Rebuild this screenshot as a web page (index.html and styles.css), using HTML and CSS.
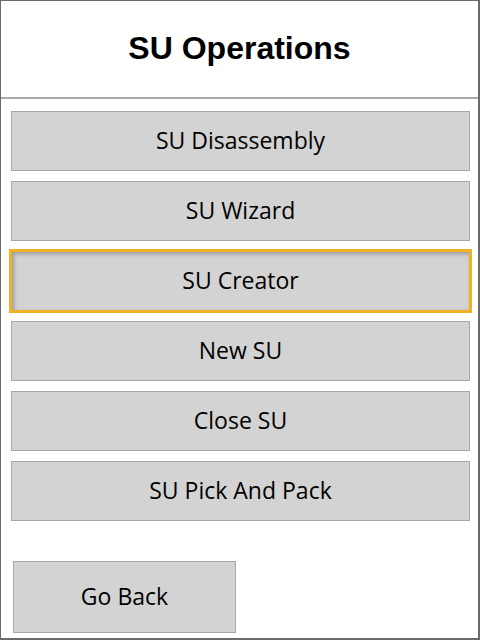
FILE: index.html
```html
<!DOCTYPE html>
<html lang="en">
<head>
<meta charset="utf-8">
<title>SU Operations</title>
<link rel="stylesheet" href="styles.css">
</head>
<body>
<div class="frame">
  <header class="header">
    <h1 class="title">SU Operations</h1>
  </header>
  <main class="menu">
    <button class="btn">SU Disassembly</button>
    <button class="btn">SU Wizard</button>
    <button class="btn btn-focus">SU Creator</button>
    <button class="btn">New SU</button>
    <button class="btn">Close SU</button>
    <button class="btn">SU Pick And Pack</button>
  </main>
  <footer class="footer">
    <button class="btn btn-back">Go Back</button>
  </footer>
</div>
</body>
</html>
```

FILE: styles.css
```css
html, body {
  margin: 0;
  padding: 0;
  background: #ffffff;
}

.frame {
  width: 480px;
  height: 640px;
  box-sizing: border-box;
  border: 1px solid #6b6b6b;
  border-right-width: 2px;
  border-bottom-width: 2px;
  display: flex;
  flex-direction: column;
  background: #ffffff;
}

.header {
  height: 96px;
  border-bottom: 2px solid #a4a9ae;
  display: flex;
  align-items: center;
  justify-content: center;
}

.title {
  margin: 0 0 2px 0;
  font-family: "Liberation Sans", Arial, sans-serif;
  font-weight: bold;
  font-size: 32px;
  color: #000000;
}

.menu {
  display: flex;
  flex-direction: column;
  gap: 10px;
  padding: 12px 8px 0 10px;
}

.btn {
  height: 60px;
  margin: 0;
  padding: 0 0 3px 0;
  box-sizing: border-box;
  border: 1px solid #a8a8a8;
  background: #d3d3d3;
  color: #000000;
  font-family: "Open Sans", "Noto Sans", sans-serif;
  font-size: 23px;
  display: flex;
  align-items: center;
  justify-content: center;
}

.btn-focus {
  outline: 3px solid #efb126;
  outline-offset: -1px;
  box-shadow: inset 2px 2px 4px rgba(0, 0, 0, 0.28);
}

.footer {
  display: flex;
  padding: 40px 0 0 12px;
}

.btn-back {
  width: 223px;
  height: 72px;
}
```
